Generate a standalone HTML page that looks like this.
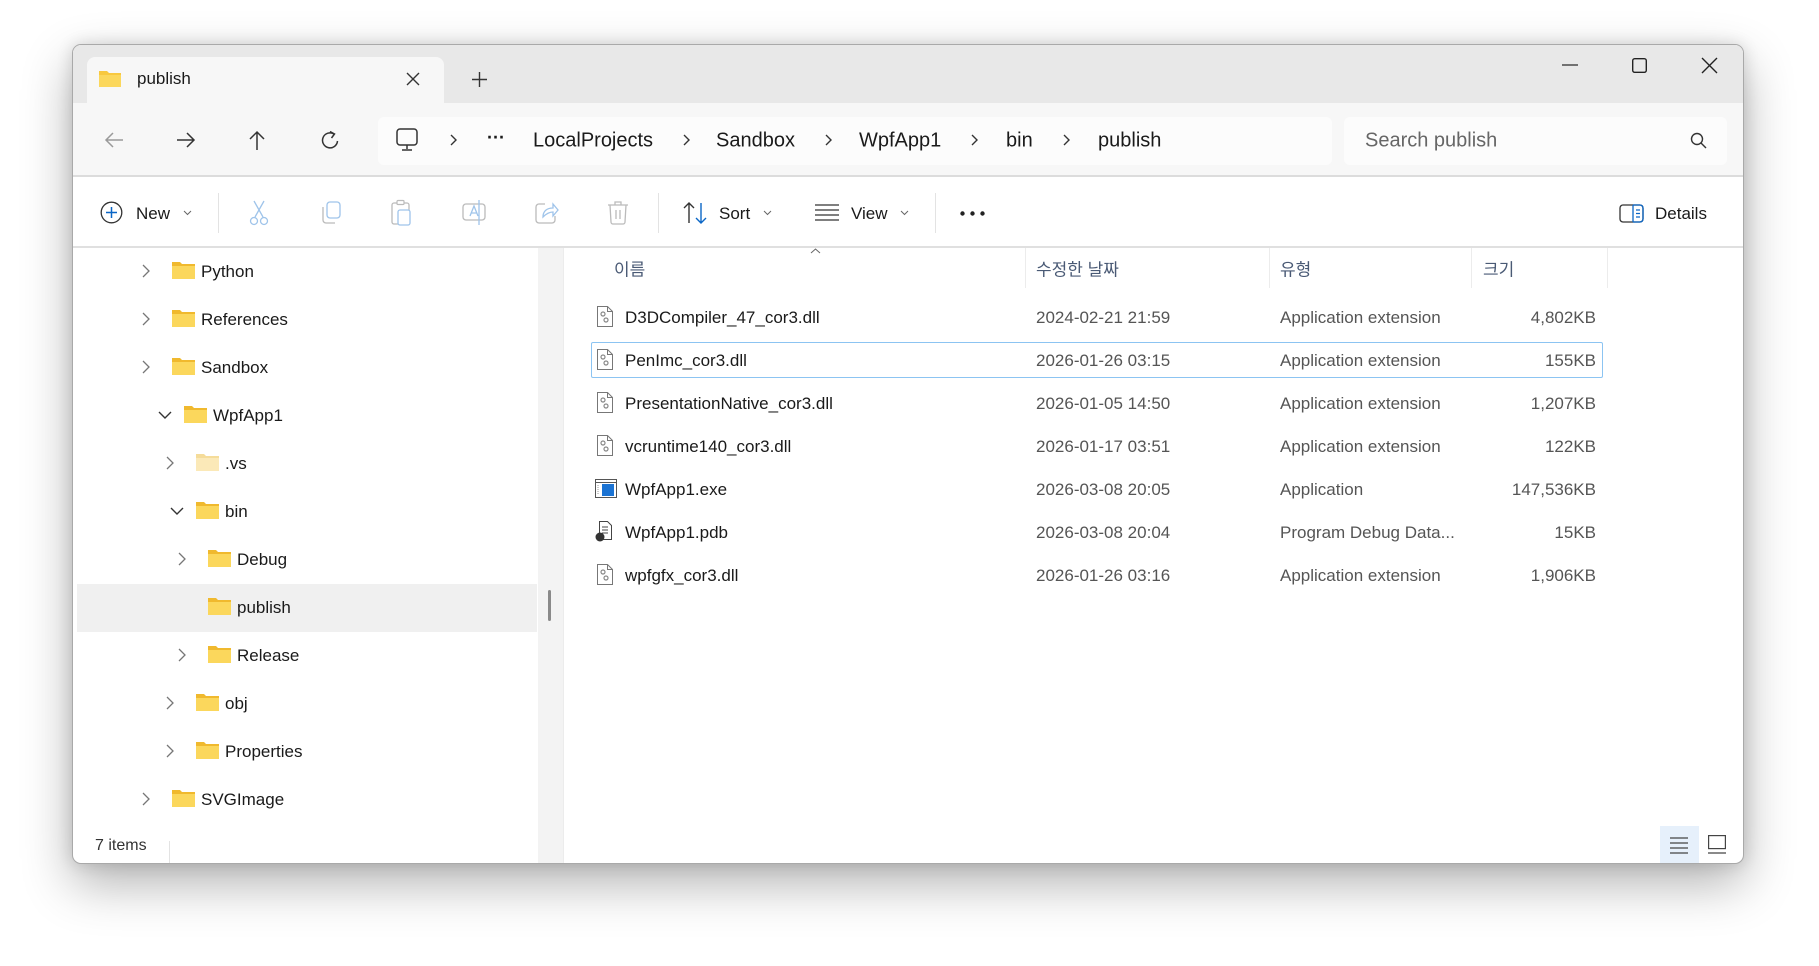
<!DOCTYPE html>
<html><head><meta charset="utf-8"><style>
*{margin:0;padding:0;box-sizing:border-box}
body{width:1819px;height:966px;background:#fff;position:relative;overflow:hidden;font-family:"Liberation Sans","Noto Sans CJK KR",sans-serif;color:#1a1a1a}
.a{position:absolute}
.win{left:72px;top:44px;width:1672px;height:820px;border:1px solid #a9a9a9;border-radius:9px;background:#fff;overflow:hidden;box-shadow:0 20px 50px rgba(0,0,0,.30),0 0 16px rgba(0,0,0,.14)}
.t{position:absolute;white-space:nowrap;transform:translateY(-50%);font-size:17px}
svg{position:absolute;overflow:visible}
</style></head><body>
<div class="a win">
 <div class="a" style="left:0;top:0;width:1672px;height:58px;background:#e8e8e8"></div>
 <div class="a" style="left:14px;top:12px;width:357px;height:50px;background:#f7f7f7;border-radius:8px 8px 0 0"></div>
 <div class="a" style="left:0;top:58px;width:1672px;height:74px;background:#f7f7f7;border-bottom:2px solid #dcdcdc"></div>
 <div class="a" style="left:305px;top:72px;width:954px;height:48px;background:#fcfcfc;border-radius:6px"></div>
 <div class="a" style="left:1271px;top:72px;width:383px;height:48px;background:#fcfcfc;border-radius:6px"></div>
 <div class="a" style="left:0;top:201px;width:1672px;height:2px;background:#e0e0e0"></div>
 <div class="a" style="left:4px;top:539px;width:460px;height:48px;background:#f0f0f0"></div>
 <div class="a" style="left:465px;top:203px;width:25px;height:622px;background:#f3f3f3"></div>
 <div class="a" style="left:475px;top:545px;width:3px;height:31px;background:#8a8a8a;border-radius:2px"></div>
 <div class="a" style="left:490px;top:203px;width:1px;height:622px;background:#ececec"></div>
 <div class="a" style="left:518px;top:297px;width:1012px;height:36px;border:1px solid #8cc4f2;border-radius:2px"></div>
 <div class="a" style="left:96px;top:796px;width:1px;height:22px;background:#e3e3e3"></div>
 <div class="a" style="left:1587px;top:781px;width:39px;height:38px;background:#e6f0fb"></div>
</div>

<svg style="left:98px;top:69px" width="24" height="20"><path d="M1 2h8l2 2h12v14H1z" fill="#f8c83f"/><path d="M1 6h22v12H1z" fill="#fbd75c"/></svg>
<div class="t" style="left:137px;top:79px;font-size:17px">publish</div>
<svg style="left:406px;top:72px" width="14" height="14"><path d="M1 1l12 12M13 1L1 13" stroke="#333" stroke-width="1.4"/></svg>
<svg style="left:472px;top:72px" width="15" height="15"><path d="M7.5 0v15M0 7.5h15" stroke="#333" stroke-width="1.4"/></svg>
<svg style="left:1562px;top:64px" width="16" height="2"><path d="M0 1h16" stroke="#222" stroke-width="1.2"/></svg>
<svg style="left:1632px;top:58px" width="15" height="15"><rect x=".7" y=".7" width="13.6" height="13.6" rx="2" fill="none" stroke="#222" stroke-width="1.4"/></svg>
<svg style="left:1702px;top:58px" width="15" height="15"><path d="M0 0l15 15M15 0L0 15" stroke="#222" stroke-width="1.4"/></svg>

<svg style="left:104px;top:131px" width="20" height="18"><path d="M19 9H2M9 2L2 9l7 7" fill="none" stroke="#9a9a9a" stroke-width="1.5"/></svg>
<svg style="left:176px;top:131px" width="20" height="18"><path d="M1 9h17M11 2l7 7-7 7" fill="none" stroke="#333" stroke-width="1.5"/></svg>
<svg style="left:248px;top:130px" width="18" height="20"><path d="M9 20V2M2 9l7-7 7 7" fill="none" stroke="#333" stroke-width="1.5"/></svg>
<svg style="left:321px;top:130px" width="18" height="20"><path d="M13 4A7.5 7.5 0 1 0 16.5 11" fill="none" stroke="#333" stroke-width="1.5"/><path d="M9 1.5l4.5 2.5-3 4" fill="none" stroke="#333" stroke-width="1.5"/></svg>
<svg style="left:396px;top:128px" width="22" height="24"><rect x="1" y="1" width="20" height="16" rx="3" fill="none" stroke="#333" stroke-width="1.5"/><path d="M11 17v4M6 22h10" stroke="#333" stroke-width="1.5"/></svg>
<svg style="left:450px;top:134px" width="7" height="12"><path d="M1 1l5 5-5 5" fill="none" stroke="#333" stroke-width="1.4"/></svg>
<div class="t" style="left:487px;top:138px;font-size:18px;font-weight:bold">···</div>
<div class="t" style="left:533px;top:141px;font-size:20px">LocalProjects</div>
<svg style="left:683px;top:134px" width="7" height="12"><path d="M1 1l5 5-5 5" fill="none" stroke="#333" stroke-width="1.4"/></svg>
<div class="t" style="left:716px;top:141px;font-size:20px">Sandbox</div>
<svg style="left:825px;top:134px" width="7" height="12"><path d="M1 1l5 5-5 5" fill="none" stroke="#333" stroke-width="1.4"/></svg>
<div class="t" style="left:859px;top:141px;font-size:20px">WpfApp1</div>
<svg style="left:971px;top:134px" width="7" height="12"><path d="M1 1l5 5-5 5" fill="none" stroke="#333" stroke-width="1.4"/></svg>
<div class="t" style="left:1006px;top:141px;font-size:20px">bin</div>
<svg style="left:1063px;top:134px" width="7" height="12"><path d="M1 1l5 5-5 5" fill="none" stroke="#333" stroke-width="1.4"/></svg>
<div class="t" style="left:1098px;top:141px;font-size:20px">publish</div>
<div class="t" style="left:1365px;top:141px;font-size:20px;color:#666">Search publish</div>
<svg style="left:1690px;top:132px" width="17" height="17"><circle cx="7" cy="7" r="5.5" fill="none" stroke="#333" stroke-width="1.4"/><path d="M11 11l5 5" stroke="#333" stroke-width="1.4"/></svg>

<svg style="left:100px;top:201px" width="23" height="23"><circle cx="11.5" cy="11.5" r="10.3" fill="none" stroke="#333" stroke-width="1.3"/><path d="M11.5 6v11M6 11.5h11" stroke="#0a66c6" stroke-width="1.5"/></svg>
<div class="t" style="left:136px;top:214px;font-size:17px">New</div>
<svg style="left:183px;top:210px" width="9" height="6"><path d="M1 1l3.5 3.5L8 1" fill="none" stroke="#666" stroke-width="1"/></svg>
<div class="a" style="left:218px;top:193px;width:1px;height:40px;background:#e3e3e3"></div>
<svg style="left:248px;top:200px" width="22" height="26"><path d="M6 1l9 16M16 1L7 17" stroke="#9fc4ea" stroke-width="1.3"/><circle cx="6" cy="21" r="3.5" fill="none" stroke="#9fc4ea" stroke-width="1.3"/><circle cx="16" cy="21" r="3.5" fill="none" stroke="#9fc4ea" stroke-width="1.3"/></svg>
<svg style="left:320px;top:201px" width="22" height="24"><rect x="7" y="1" width="13" height="16" rx="3" fill="none" stroke="#9fc4ea" stroke-width="1.3"/><path d="M3 6v13a3 3 0 0 0 3 3h9" fill="none" stroke="#bbb" stroke-width="1.3"/></svg>
<svg style="left:391px;top:199px" width="22" height="27"><rect x="1" y="4" width="17" height="21" rx="2" fill="none" stroke="#bbb" stroke-width="1.3"/><rect x="6" y="1.5" width="7" height="4" rx="1" fill="#fff" stroke="#bbb" stroke-width="1.2"/><rect x="7" y="11" width="12" height="15" rx="2" fill="#fff" stroke="#9fc4ea" stroke-width="1.3"/></svg>
<svg style="left:462px;top:199px" width="26" height="27"><rect x="1" y="5" width="22" height="16" rx="3" fill="none" stroke="#bbb" stroke-width="1.3"/><path d="M8 17l4-10 4 10M9.5 14h5M17 1v25" fill="none" stroke="#9fc4ea" stroke-width="1.3"/></svg>
<svg style="left:535px;top:201px" width="24" height="23"><path d="M10 3H4a3 3 0 0 0-3 3v13a3 3 0 0 0 3 3h13a3 3 0 0 0 3-3v-4" fill="none" stroke="#bbb" stroke-width="1.3"/><path d="M8 16c0-6 4-9 10-9V3l5 6-5 6v-4c-4 0-7 2-10 5z" fill="none" stroke="#9fc4ea" stroke-width="1.3"/></svg>
<svg style="left:607px;top:200px" width="22" height="25"><path d="M1 5h20M8 5V2h6v3M3 5l1 17a2 2 0 0 0 2 2h10a2 2 0 0 0 2-2l1-17M9 10v9M13 10v9" fill="none" stroke="#bbb" stroke-width="1.3"/></svg>
<div class="a" style="left:658px;top:193px;width:1px;height:40px;background:#e3e3e3"></div>
<svg style="left:683px;top:202px" width="25" height="22"><path d="M6 21V1M1 6l5-5 5 5" fill="none" stroke="#333" stroke-width="1.4"/><path d="M18 1v20M13 16l5 5 5-5" fill="none" stroke="#0a66c6" stroke-width="1.4"/></svg>
<div class="t" style="left:719px;top:214px;font-size:17px">Sort</div>
<svg style="left:763px;top:210px" width="9" height="6"><path d="M1 1l3.5 3.5L8 1" fill="none" stroke="#666" stroke-width="1"/></svg>
<svg style="left:815px;top:204px" width="24" height="17"><path d="M0 1h24M0 6h24M0 11h24M0 16h24" stroke="#333" stroke-width="1.3"/></svg>
<div class="t" style="left:851px;top:214px;font-size:17px">View</div>
<svg style="left:900px;top:210px" width="9" height="6"><path d="M1 1l3.5 3.5L8 1" fill="none" stroke="#666" stroke-width="1"/></svg>
<div class="a" style="left:935px;top:193px;width:1px;height:40px;background:#e3e3e3"></div>
<svg style="left:960px;top:211px" width="26" height="5"><circle cx="2.5" cy="2.5" r="2.2" fill="#222"/><circle cx="12.5" cy="2.5" r="2.2" fill="#222"/><circle cx="22.5" cy="2.5" r="2.2" fill="#222"/></svg>
<svg style="left:1619px;top:204px" width="25" height="19"><rect x="1" y="1" width="23" height="17" rx="3" fill="none" stroke="#333" stroke-width="1.3"/><path d="M14 1v17" stroke="#0a66c6" stroke-width="1.3"/><path d="M17 6h4M17 9.5h4M17 13h4" stroke="#0a66c6" stroke-width="1.2"/><path d="M14 1h7a3 3 0 0 1 3 3v11a3 3 0 0 1-3 3h-7" fill="none" stroke="#0a66c6" stroke-width="1.3"/></svg>
<div class="t" style="left:1655px;top:214px;font-size:17px">Details</div>

<div id="tree"></div>
<script>
var rows=[["Python",0,">"],["References",0,">"],["Sandbox",0,">"],["WpfApp1",1,"v"],[".vs",2,">",1],["bin",2,"v"],["Debug",3,">"],["publish",3,""],["Release",3,">"],["obj",2,">"],["Properties",2,">"],["SVGImage",0,">"]];
var h="";
rows.forEach(function(r,i){var y=271+48*i;var ind=[0,12,24,36][r[1]];
if(r[2]==">")h+='<svg style="left:'+(142+ind)+'px;top:'+(y-7)+'px" width="8" height="14"><path d="M1 1l6 6-6 6" fill="none" stroke="#777" stroke-width="1.3"/></svg>';
if(r[2]=="v")h+='<svg style="left:'+(148+ind-2)+'px;top:'+(y-4)+'px" width="14" height="8"><path d="M1 1l6 6 6-6" fill="none" stroke="#333" stroke-width="1.4"/></svg>';
var c=r[3]?'#fbe9b8':'#fbd75c',c2=r[3]?'#f5dc9a':'#f0b92e';
h+='<svg style="left:'+(172+ind)+'px;top:'+(y-10)+'px" width="23" height="19"><path d="M0 1h8l2 2h13v15H0z" fill="'+c2+'"/><path d="M0 5h23v13H0z" fill="'+c+'"/></svg>';
h+='<div class="t" style="left:'+(201+ind)+'px;top:'+(y+1)+'px">'+r[0]+'</div>';});
document.getElementById('tree').innerHTML=h;
</script>

<div class="t" style="left:614px;top:268px;font-size:17px;color:#4a5a75">이름</div>
<svg style="left:810px;top:248px" width="11" height="6"><path d="M1 5l4.5-4 4.5 4" fill="none" stroke="#666" stroke-width="1"/></svg>
<div class="a" style="left:1025px;top:248px;width:1px;height:40px;background:#ececec"></div>
<div class="t" style="left:1036px;top:268px;font-size:17px;color:#4a5a75">수정한 날짜</div>
<div class="a" style="left:1269px;top:248px;width:1px;height:40px;background:#ececec"></div>
<div class="t" style="left:1280px;top:268px;font-size:17px;color:#4a5a75">유형</div>
<div class="a" style="left:1471px;top:248px;width:1px;height:40px;background:#ececec"></div>
<div class="t" style="left:1483px;top:268px;font-size:17px;color:#4a5a75">크기</div>
<div class="a" style="left:1607px;top:248px;width:1px;height:40px;background:#ececec"></div>

<div id="files"></div>
<script>
var f=[["D3DCompiler_47_cor3.dll","2024-02-21 21:59","Application extension","4,802KB","d"],
["PenImc_cor3.dll","2026-01-26 03:15","Application extension","155KB","d"],
["PresentationNative_cor3.dll","2026-01-05 14:50","Application extension","1,207KB","d"],
["vcruntime140_cor3.dll","2026-01-17 03:51","Application extension","122KB","d"],
["WpfApp1.exe","2026-03-08 20:05","Application","147,536KB","e"],
["WpfApp1.pdb","2026-03-08 20:04","Program Debug Data...","15KB","p"],
["wpfgfx_cor3.dll","2026-01-26 03:16","Application extension","1,906KB","d"]];
var g="";
f.forEach(function(r,i){var y=317+43*i;var ty=y+1;
if(r[4]=="d")g+='<svg style="left:597px;top:'+(y-11)+'px" width="16" height="21"><path d="M.5 .5h10l5 5v15H.5z" fill="#fff" stroke="#777"/><path d="M10.5 .5v5h5" fill="none" stroke="#777"/><circle cx="6" cy="8" r="2" fill="none" stroke="#888" stroke-width="1.2"/><circle cx="9" cy="14" r="2" fill="none" stroke="#888" stroke-width="1.2"/></svg>';
if(r[4]=="e")g+='<svg style="left:595px;top:'+(y-10)+'px" width="22" height="19"><rect x=".5" y=".5" width="21" height="18" fill="#fff" stroke="#555"/><path d="M.5 3.5h21" stroke="#555"/><rect x="7" y="5" width="12" height="12" fill="#1b73d3"/><path d="M3 6v10" stroke="#999" stroke-dasharray="1 1"/></svg>';
if(r[4]=="p")g+='<svg style="left:595px;top:'+(y-11)+'px" width="18" height="22"><path d="M4.5 .5h8l4 4v14h-12z" fill="#fff" stroke="#444"/><path d="M7 6h6M7 9h6M7 12h6" stroke="#444"/><circle cx="5" cy="16" r="4.5" fill="#333"/></svg>';
g+='<div class="t" style="left:625px;top:'+ty+'px">'+r[0]+'</div>';
g+='<div class="t" style="left:1036px;top:'+ty+'px;color:#555">'+r[1]+'</div>';
g+='<div class="t" style="left:1280px;top:'+ty+'px;color:#555">'+r[2]+'</div>';
g+='<div class="t" style="right:223px;top:'+ty+'px;color:#555">'+r[3]+'</div>';});
document.getElementById('files').innerHTML=g;
</script>

<div class="t" style="left:95px;top:846px;font-size:16px;color:#333">7 items</div>
<svg style="left:1670px;top:837px" width="18" height="17"><path d="M0 1h18M0 6h18M0 11h18M0 16h18" stroke="#444" stroke-width="1.2"/></svg>
<svg style="left:1708px;top:835px" width="18" height="19"><rect x=".6" y=".6" width="16.8" height="13" fill="none" stroke="#444" stroke-width="1.2"/><path d="M0 18h18" stroke="#444" stroke-width="1.2"/></svg>
</body></html>
